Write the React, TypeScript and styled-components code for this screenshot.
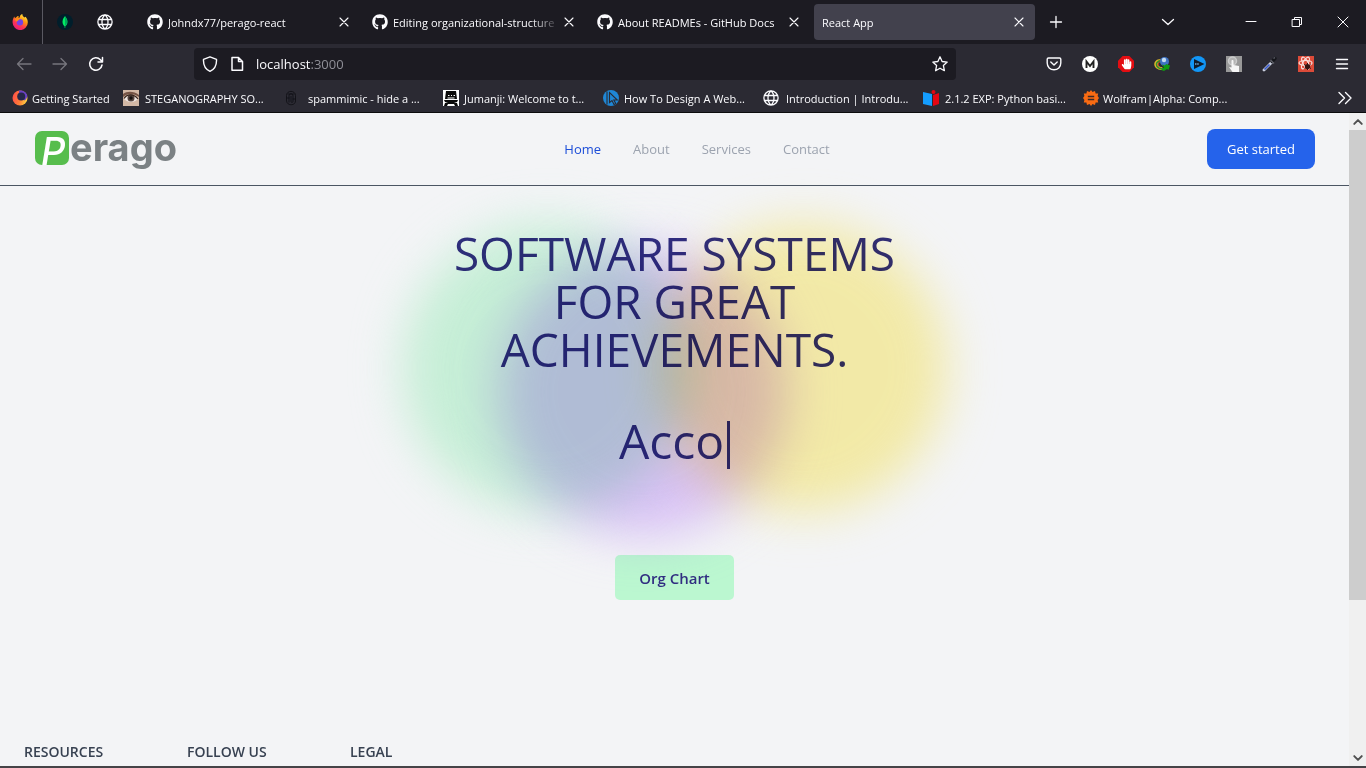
import React from 'react';
import styled, { createGlobalStyle, css } from 'styled-components';
import { FaGithub, FaHandPaper } from 'react-icons/fa';

const uiFont = '"Open Sans", "Noto Sans", sans-serif';

const GlobalStyle = createGlobalStyle`
  *, *::before, *::after { box-sizing: border-box; }
  body { margin: 0; font-family: ${uiFont}; }
  button, input { font: inherit; color: inherit; }
  button { border: 0; padding: 0; background: none; cursor: pointer; }
  a { color: inherit; text-decoration: none; }
  h1, h2, p, ul { margin: 0; padding: 0; font-weight: 400; }
  ul { list-style: none; }
  svg { display: block; flex: none; }
`;

/* ---------- browser chrome ---------- */

const Browser = styled.div`
  display: flex;
  flex-direction: column;
  height: 100vh;
  overflow: hidden;
  color: #fbfbfe;
  font-size: 11px;
  border-bottom: 2px solid #454347;
`;

const TabBar = styled.div`
  display: flex;
  align-items: center;
  flex: none;
  height: 44px;
  background: #1c1b22;
`;

const PinnedTabs = styled.div`
  display: flex;
  flex: none;
  margin-right: 12px;
`;

const PinnedTab = styled.button<{ $divider?: boolean }>`
  display: grid;
  place-items: center;
  width: ${(p) => (p.$divider ? 43 : 40)}px;
  height: 44px;
  ${(p) => p.$divider && css`
    border-right: 1px solid #5a5962;
    margin-right: 2px;
    padding-right: 2px;
  `}
`;

const Tab = styled.div<{ $active?: boolean }>`
  display: flex;
  align-items: center;
  gap: 5px;
  flex: 0 1 221px;
  min-width: 0;
  height: 36px;
  margin: 0 2px;
  padding: 0 8px;
  border-radius: 4px;
  background: ${(p) => (p.$active ? '#42414d' : 'transparent')};
`;

const TabTitle = styled.span<{ $fade?: boolean }>`
  flex: 1;
  min-width: 0;
  overflow: hidden;
  white-space: nowrap;
  ${(p) => p.$fade && css`mask-image: linear-gradient(to left, transparent, #000 30px);`}
`;

const TabClose = styled.button`
  display: grid;
  place-items: center;
  width: 16px;
  height: 16px;
  margin-left: -5px;
`;

const BarButton = styled.button<{ $width?: number }>`
  display: grid;
  place-items: center;
  flex: none;
  width: ${(p) => p.$width ?? 36}px;
  height: 36px;
`;

const TabTools = styled.div`
  display: flex;
  justify-content: space-between;
  flex: 1;
  padding: 0 42px 0 1px;
`;

const Toolbar = styled.div`
  display: flex;
  align-items: center;
  flex: none;
  height: 40px;
  padding: 0 6px;
  background: #2b2a33;
`;

const AddressBar = styled.div`
  display: flex;
  align-items: center;
  flex: 1;
  height: 32px;
  margin: 0 80px;
  padding: 0 8px;
  gap: 11px;
  border-radius: 4px;
  background: #1c1b22;
`;

const Address = styled.span`
  flex: 1;
  font-size: 13px;
  span { color: #8f8f97; }
`;

const Bookmarks = styled.nav`
  display: flex;
  align-items: center;
  flex: none;
  height: 29px;
  padding-left: 12px;
  background: #2b2a33;
  border-bottom: 1px solid #0c0c0d;
`;

const Bookmark = styled.a<{ $first?: boolean; $gap?: number }>`
  display: flex;
  align-items: center;
  flex: none;
  gap: ${(p) => p.$gap ?? 5}px;
  width: ${(p) => (p.$first ? 111 : 160)}px;
  white-space: nowrap;
`;

const Overflow = styled.button`
  margin-left: auto;
  margin-right: 13px;
`;

/* ---------- web page ---------- */

const Viewport = styled.div`
  display: flex;
  flex: 1;
  min-height: 0;
  background: #f3f4f6;
`;

const Page = styled.div`
  display: flex;
  flex-direction: column;
  flex: 1;
  min-width: 0;
  overflow: hidden;
  font-size: 13px;
`;

const Header = styled.header`
  display: flex;
  align-items: center;
  justify-content: space-between;
  flex: none;
  height: 73px;
  padding: 0 34px 0 35px;
  border-bottom: 1px solid #4b5563;
`;

const Brand = styled.a`
  width: 152px;
`;

const NavList = styled.ul`
  display: flex;
  gap: 32px;
`;

const NavLink = styled.a<{ $current?: boolean }>`
  color: ${(p) => (p.$current ? '#1d4ed8' : '#9ca3af')};
`;

const StartButton = styled.button`
  height: 40px;
  padding: 0 20px;
  border-radius: 8px;
  background: #2563eb;
  color: #fff;
`;

const Hero = styled.main`
  position: relative;
  display: flex;
  flex-direction: column;
  align-items: center;
  flex: 1;
  width: 100%;
  max-width: 512px;
  margin: 0 auto;
  padding-top: 43px;
  color: #312e81;
  text-align: center;
`;

const Headline = styled.h1`
  font-size: 46px;
  line-height: 48px;
`;

const Typed = styled.p`
  display: flex;
  align-items: flex-start;
  gap: 3px;
  margin-top: 44px;
  font-size: 48px;
  line-height: 48px;
`;

const Caret = styled.span`
  width: 3px;
  height: 48px;
  margin-top: 4px;
  background: #312e81;
`;

const ChartButton = styled.button`
  height: 45px;
  margin-top: 86px;
  padding: 0 24px;
  border-radius: 5px;
  background: #bbf7d0;
  font-size: 15px;
  font-weight: 600;
`;

const Blob = styled.div<{ $color: string; $left: number; $top: number }>`
  position: absolute;
  left: ${(p) => p.$left}px;
  top: ${(p) => p.$top}px;
  width: 288px;
  height: 288px;
  border-radius: 50%;
  background: ${(p) => p.$color};
  mix-blend-mode: multiply;
  filter: blur(24px);
  opacity: 0.7;
  pointer-events: none;
`;

const Footer = styled.footer`
  display: grid;
  grid-template-columns: repeat(3, 163px);
  flex: none;
  padding: 0 24px 4px;
`;

const FooterTitle = styled.h2`
  color: #374151;
  font-size: 14px;
  font-weight: 600;
  line-height: 20px;
`;

const ScrollTrack = styled.div`
  display: flex;
  flex-direction: column;
  flex: none;
  width: 17px;
  background: #f0f0f0;
`;

const ScrollArrow = styled.button`
  display: grid;
  place-items: center;
  height: 17px;
`;

const ScrollRail = styled.div`
  flex: 1;
`;

const ScrollThumb = styled.div`
  height: 76%;
  background: #cdcdcd;
`;

const LogoDrawing = styled.svg`
  overflow: visible;
`;

/* ---------- icons ---------- */

const Line = ({ d, size = 16, w = 1, color = '#fbfbfe' }: { d: string; size?: number; w?: number; color?: string }) => (
  <svg width={size} height={size} viewBox="0 0 16 16" fill="none" stroke={color} strokeWidth={w} strokeLinecap="round" strokeLinejoin="round" aria-hidden="true">
    <path d={d} />
  </svg>
);

const Cross = () => <Line d="M4 4l8 8M12 4l-8 8" w={1.1} />;

const Globe = () => (
  <Line w={1.3} d="M8 .9a7.1 7.1 0 1 0 0 14.2A7.1 7.1 0 0 0 8 .9zM8 1C4 4 4 12 8 15M8 1c4 3 4 11 0 14M1.4 5.5h13.2M1.4 10.5h13.2" />
);

const FirefoxView = () => (
  <svg width="16" height="16" viewBox="0 0 16 16" aria-hidden="true">
    <defs>
      <linearGradient id="fx-view" x1=".8" y1="0" x2=".2" y2="1">
        <stop offset="0" stopColor="#fff44f" />
        <stop offset=".35" stopColor="#ff980e" />
        <stop offset=".65" stopColor="#ff3750" />
        <stop offset="1" stopColor="#e31587" />
      </linearGradient>
    </defs>
    <path fill="url(#fx-view)" d="M10.3 0c.1 1.8 1 2.6 2 3.6l1.200-.8c1.500 1.500 2.300 3.500 2.300 5.700a7.600 7.600 0 0 1-15.200 0C.5 6.500 1 4.200 2.400 2.500l.5 1.700 1.400-.9C5 2.300 6 1.900 7 2c-.6.4-.9 1-.9 1.600h1.800C7.500 2 8.500.7 10.300 0z" />
    <circle cx="7.900" cy="8.300" r="3.200" fill="#7542e5" />
    <path fill="#ff8a16" d="M3 5c2-.9 3.500-.2 4.700.6-1.800.4-1.400 1.600-2.800 2C4 7.500 3.200 6.500 3 5z" />
  </svg>
);

const FirefoxRing = () => (
  <svg width="16" height="16" viewBox="0 0 16 16" aria-hidden="true">
    <defs>
      <linearGradient id="fx-ring" x1="0" y1=".4" x2="1" y2=".6">
        <stop offset="0" stopColor="#ff4f4a" />
        <stop offset=".5" stopColor="#ff7b36" />
        <stop offset="1" stopColor="#ffd843" />
      </linearGradient>
    </defs>
    <circle cx="8" cy="8" r="7.500" fill="url(#fx-ring)" />
    <path fill="#6a42c4" d="M7 .6c4-.8 7.600 1.600 8.300 5.400-.3 2-1.300 3.500-2.800 4.500L7 5z" />
    <circle cx="9.200" cy="6.600" r="4" fill="#26284a" />
  </svg>
);

const Mongo = () => (
  <svg width="16" height="16" viewBox="0 0 16 16" aria-hidden="true">
    <circle cx="8" cy="8" r="8" fill="#001e2b" />
    <path fill="#00ed64" d="M8 2c.6 1.100 2.500 2.700 2.500 5.700 0 2.200-1 3.600-2.200 4.500L8.200 14h-.5l-.1-1.800C6.500 11.300 5.500 10 5.500 7.700 5.500 4.700 7.500 3 8 2z" />
    <path fill="#00a35c" d="M8 2.500c2.800 3.500 2.500 7.500.2 9.500z" />
  </svg>
);

const Eye = () => (
  <svg width="16" height="16" viewBox="0 0 16 16" aria-hidden="true">
    <path fill="#d3b8a6" d="M0 0h16v16H0z" />
    <path fill="#765446" d="M0 4c4-3 11-3 16 1v2C10 3 5 3 0 7z" />
    <path fill="#efe6e2" d="M1 9c3-5 10-5 14 0-4 4-10 4-14 0z" />
    <circle cx="8" cy="8" r="3.500" fill="#54433e" />
    <circle cx="8" cy="8" r="1.700" fill="#16100f" />
    <path fill="none" stroke="#35221b" strokeWidth="1.200" d="M1 8.500c3-5 10-5 14 .5" />
  </svg>
);

const Fingerprint = () => (
  <Line color="#111116" w={0.9} d="M3.500 10.500V5.500C3.500 0 12.500 0 12.500 5.500V11c0 5-9 5-9 0M6 12V6c0-3 4-3 4 0v5c0 2-2 2-2 0V6.500M4 8h2M10 9h2M5 4h6" />
);

const Movie = () => (
  <svg width="16" height="16" viewBox="0 0 16 16" aria-hidden="true">
    <path fill="#fff" d="M0 0h16v16H0z" />
    <path fill="#0b0b0b" d="M3 1h10l1 8H2zM1 10h14l-1 2H2zM2 13l3-1h6l3 1 1 3h-3l-1-2H5l-1 2H1z" />
    <path stroke="#fff" strokeWidth="1" d="M5 5.500h1.500M8 5.500h1M10.500 5.500H12M4.500 8h7" />
  </svg>
);

const Cursor = () => (
  <svg width="16" height="16" viewBox="0 0 16 16" aria-hidden="true">
    <circle cx="8" cy="8" r="8" fill="#1f87d6" />
    <path fill="none" stroke="#2b2a33" strokeWidth="1.100" d="M4 1.500v13M6.500 2.500v10l2.500-2 2 4 1.800-1-2-3.500h3.500z" />
  </svg>
);

const Book = () => (
  <svg width="16" height="16" viewBox="0 0 16 16" aria-hidden="true">
    <path fill="#149dff" d="M0 2l9 2v12l-9-2z" />
    <path fill="#e30613" d="M10 5l6-2v11l-6 2z" />
    <circle cx="10.500" cy="2" r="2" fill="#e30613" />
  </svg>
);

const Wolfram = () => (
  <svg width="16" height="16" viewBox="0 0 16 16" aria-hidden="true">
    <path fill="#f96b13" d="M8 0l1.500 2.100L12 .9l.6 2.500 2.600.2-.6 2.500L16 8l-1.400 1.900.6 2.500-2.600.2-.6 2.500-2.500-1.200L8 16l-1.500-2.100L4 15.100l-.6-2.500-2.600-.2.6-2.500L0 8l1.400-1.900L.8 3.600l2.600-.2L4 .9l2.500 1.200z" />
    <path stroke="#3b2a28" strokeWidth="1.300" d="M4.800 6.500h6.400M4.800 9.500h6.400" />
  </svg>
);

const Pocket = () => (
  <Line w={1.4} d="M2.500 2h11c.8 0 1.300.5 1.300 1.300V7c0 4-3 6.800-6.800 6.800S1.200 11 1.200 7V3.300C1.200 2.500 1.700 2 2.500 2zM4.800 6l3.200 3 3.200-3" />
);

const MediumMark = () => (
  <svg width="16" height="16" viewBox="0 0 16 16" aria-hidden="true">
    <circle cx="8" cy="8" r="8" fill="#fff" />
    <path fill="none" stroke="#222" strokeWidth="1.900" d="M4.500 12V5.500L8 10l3.500-4.500V12" />
  </svg>
);

const StopHand = () => (
  <svg width="16" height="16" viewBox="0 0 16 16" aria-hidden="true">
    <path fill="#e40d12" d="M4.700 0h6.600L16 4.700v6.600L11.300 16H4.700L0 11.300V4.700z" />
    <FaHandPaper x="3" y="2.500" width="10" height="11" color="#fff" />
  </svg>
);

const Downloader = () => (
  <svg width="16" height="16" viewBox="0 0 16 16" aria-hidden="true">
    <path fill="#d9b52a" d="M7 3C2 3 0 6 .3 9 1 13 6 14.500 10 14L8 11c-3 0-4.500-2-3.500-4.500z" />
    <path fill="none" stroke="#2f8f2a" strokeWidth="1.500" d="M7 4.500C3 5 1.500 8 2.800 10.200 4 12 6 13 9 12.800" />
    <path fill="none" stroke="#c9382a" d="M6.500 5.500C4 6.500 3.300 9 4.500 10.500" />
    <circle cx="10.500" cy="5.500" r="4.500" fill="#3f73c4" />
    <circle cx="10" cy="4" r="2.200" fill="#c5dcf0" />
    <path fill="#0f9a12" d="M8 8.500l3 1 1-1.500 4 1.500-1.500 4.500-1.500-1L10 15l-3-1 3-2.500z" />
  </svg>
);

const PlayMark = () => (
  <svg width="16" height="16" viewBox="0 0 16 16" aria-hidden="true">
    <circle cx="8" cy="8" r="8" fill="#1296f6" />
    <path fill="#101b29" d="M4 3l10.500 5L4 13z" />
    <path stroke="#6da9d8" strokeWidth="1.500" strokeDasharray="1.500 .7" d="M5 8h4" />
  </svg>
);

const TouchHand = () => (
  <svg width="16" height="16" viewBox="0 0 16 16" aria-hidden="true">
    <path fill="#999" d="M0 0h16v16H0z" />
    <circle cx="6.500" cy="5" r="4" fill="#b4b4b4" stroke="#ccc" strokeWidth="1.500" />
    <path fill="#f6f6f6" d="M5.500 5c0-1.300 2-1.300 2 0v4l5.500 1v6H6.500L3 11l2.500.5z" />
  </svg>
);

const Dropper = () => (
  <svg width="16" height="16" viewBox="0 0 16 16" aria-hidden="true">
    <path stroke="#c9cede" strokeWidth="2.800" strokeLinecap="round" d="M2 14L9.500 6.500" />
    <path stroke="#3959c9" strokeWidth="1.700" d="M2.500 13.500L7.500 8.500" />
    <path stroke="#15161b" strokeWidth="3.200" strokeLinecap="round" d="M10 5.500L13 2.500" />
    <path stroke="#5c5e67" strokeWidth="1.500" d="M8.500 4l3.500 3.500M11.500 2.500l1.500-1" />
  </svg>
);

const ReactBug = () => (
  <svg width="16" height="16" viewBox="0 0 16 16" aria-hidden="true">
    <path fill="#dd4b39" d="M0 0h16v16H0z" />
    <g fill="none" stroke="#f9e0dd" strokeWidth="1.200">
      <ellipse cx="7.500" cy="7" rx="6.500" ry="2.500" />
      <ellipse cx="7.500" cy="7" rx="6.500" ry="2.500" transform="rotate(60 7.500 7)" />
      <ellipse cx="7.500" cy="7" rx="6.500" ry="2.500" transform="rotate(120 7.500 7)" />
    </g>
    <circle cx="9.500" cy="10.500" r="2.600" fill="#351512" />
    <path stroke="#351512" d="M6 8.500l7 4M6.500 12.500l6-4M9.500 7v7" />
  </svg>
);

const PeragoLogo = () => (
  <LogoDrawing width="152" height="44" viewBox="0 0 152 44" role="img" aria-label="perago">
    <rect y="4" width="34" height="34" rx="7" fill="#57bd4d" />
    <text x="6" y="38" fontFamily="Inter" fontSize="38" fontStyle="italic" fontWeight="500" fill="#fff">P</text>
    <text x="35" y="34" fontFamily="Inter" fontSize="38" fontWeight="700" fill="#7b8184">erago</text>
  </LogoDrawing>
);

/* ---------- data ---------- */

const githubTabs = [
  { title: 'Johndx77/perago-react' },
  { title: 'Editing organizational-structure', fade: true },
  { title: 'About READMEs - GitHub Docs' },
];

const bookmarks = [
  { title: 'Getting Started', icon: <FirefoxRing />, gap: 4 },
  { title: 'STEGANOGRAPHY SO...', icon: <Eye />, gap: 6 },
  { title: 'spammimic - hide a ...', icon: <Fingerprint />, gap: 9 },
  { title: 'Jumanji: Welcome to t...', icon: <Movie /> },
  { title: 'How To Design A Web...', icon: <Cursor /> },
  { title: 'Introduction | Introdu...', icon: <Globe />, gap: 7 },
  { title: '2.1.2 EXP: Python basi...', icon: <Book />, gap: 6 },
  { title: 'Wolfram|Alpha: Comp...', icon: <Wolfram />, gap: 4 },
];

const extensions = [
  { label: 'Save to Pocket', icon: <Pocket /> },
  { label: 'Medium', icon: <MediumMark /> },
  { label: 'Ad blocker', icon: <StopHand /> },
  { label: 'Download manager', icon: <Downloader /> },
  { label: 'Video player', icon: <PlayMark /> },
  { label: 'Touch', icon: <TouchHand /> },
  { label: 'Color picker', icon: <Dropper /> },
  { label: 'React tools', icon: <ReactBug /> },
  { label: 'Menu', icon: <Line w={1.4} d="M2.500 3.500h11M2.500 8h11M2.500 12.500h11" /> },
];

const navItems = ['Home', 'About', 'Services', 'Contact'];
const footerTitles = ['RESOURCES', 'FOLLOW US', 'LEGAL'];

export default function App() {
  return (
    <Browser>
      <GlobalStyle />
      <TabBar>
        <PinnedTabs>
          <PinnedTab $divider aria-label="Firefox View"><FirefoxView /></PinnedTab>
          <PinnedTab aria-label="MongoDB"><Mongo /></PinnedTab>
          <PinnedTab aria-label="Pinned page"><Globe /></PinnedTab>
        </PinnedTabs>
        {githubTabs.map((tab) => (
          <Tab key={tab.title}>
            <FaGithub size={16} />
            <TabTitle $fade={tab.fade}>{tab.title}</TabTitle>
            <TabClose aria-label="Close tab"><Cross /></TabClose>
          </Tab>
        ))}
        <Tab $active>
          <TabTitle>React App</TabTitle>
          <TabClose aria-label="Close tab"><Cross /></TabClose>
        </Tab>
        <TabTools>
          <BarButton aria-label="New tab"><Line w={1.3} d="M8 2.500v11M2.500 8h11" /></BarButton>
          <BarButton aria-label="List tabs"><Line w={1.3} d="M2.500 5.500L8 10.500l5.500-5" /></BarButton>
        </TabTools>
        <BarButton $width={46} aria-label="Minimize"><Line d="M3 7.500h10" /></BarButton>
        <BarButton $width={46} aria-label="Restore"><Line d="M3.500 5.500h7v7h-7zM5.500 5.500v-2h7v7h-2" /></BarButton>
        <BarButton $width={46} aria-label="Close"><Line d="M3 3l10 10M13 3L3 13" /></BarButton>
      </TabBar>

      <Toolbar>
        <BarButton aria-label="Back"><Line color="#77767e" w={1.3} d="M15 8H1.500M7 2.500L1.500 8 7 13.500" /></BarButton>
        <BarButton aria-label="Forward"><Line color="#77767e" w={1.3} d="M1 8h13.500M9 2.500L14.500 8 9 13.500" /></BarButton>
        <BarButton aria-label="Reload"><Line w={1.5} d="M14 9a6.200 6.200 0 1 1-1.600-5.300L14.500 6M14.500 1.500V6H10" /></BarButton>
        <AddressBar>
          <Line w={1.4} d="M8 .8l6.500 2.500c.3 5.500-1.500 9.700-6.500 12-5-2.300-6.800-6.500-6.500-12z" />
          <Line w={1.5} d="M3 1.500h6.500L13.500 5.500v8.800H3zM9.500 1.500v4h4" />
          <Address>localhost<span>:3000</span></Address>
          <Line w={1.3} d="M8 .8l2.100 4.700 5.100.6-3.800 3.500 1 5.100L8 12.200l-4.400 2.500 1-5.100L.8 6.100l5.100-.6z" />
        </AddressBar>
        {extensions.map((item) => (
          <BarButton key={item.label} aria-label={item.label}>{item.icon}</BarButton>
        ))}
      </Toolbar>

      <Bookmarks>
        {bookmarks.map((item, index) => (
          <Bookmark key={item.title} href="#" $first={index === 0} $gap={item.gap}>
            {item.icon}
            {item.title}
          </Bookmark>
        ))}
        <Overflow aria-label="More bookmarks"><Line w={1.4} d="M2 2.500L7.500 8 2 13.500M8.500 2.500L14 8l-5.500 5.500" /></Overflow>
      </Bookmarks>

      <Viewport>
        <Page>
          <Header>
            <Brand href="#"><PeragoLogo /></Brand>
            <nav>
              <NavList>
                {navItems.map((item, index) => (
                  <li key={item}><NavLink href="#" $current={index === 0}>{item}</NavLink></li>
                ))}
              </NavList>
            </nav>
            <StartButton>Get started</StartButton>
          </Header>
          <Hero>
            <Headline>SOFTWARE SYSTEMS FOR GREAT ACHIEVEMENTS.</Headline>
            <Typed>Acco<Caret /></Typed>
            <ChartButton>Org Chart</ChartButton>
            <Blob $color="#bbf7d0" $left={-16} $top={38} />
            <Blob $color="#fef08a" $left={240} $top={38} />
            <Blob $color="#d8b4fe" $left={80} $top={62} />
          </Hero>
          <Footer>
            {footerTitles.map((title) => <FooterTitle key={title}>{title}</FooterTitle>)}
          </Footer>
        </Page>
        <ScrollTrack>
          <ScrollArrow aria-label="Scroll up"><Line color="#505050" size={12} w={2.6} d="M3 10.500l5-5 5 5" /></ScrollArrow>
          <ScrollRail><ScrollThumb /></ScrollRail>
          <ScrollArrow aria-label="Scroll down"><Line color="#505050" size={12} w={2.6} d="M3 5.500l5 5 5-5" /></ScrollArrow>
        </ScrollTrack>
      </Viewport>
    </Browser>
  );
}
